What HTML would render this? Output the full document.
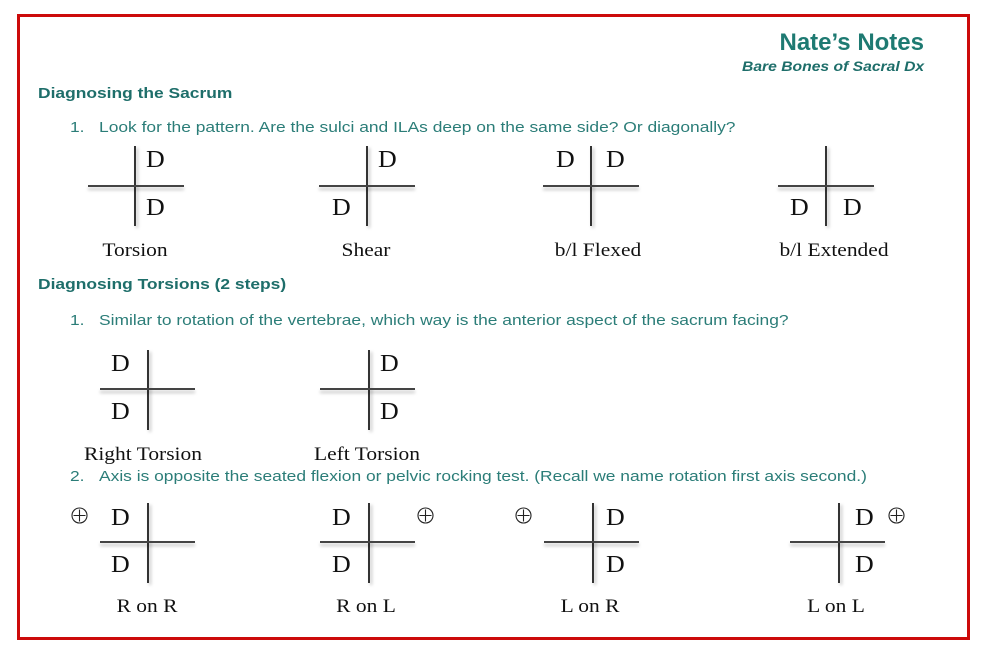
<!DOCTYPE html>
<html><head><style>
body{margin:0;width:982px;height:654px;background:#fff;position:relative;overflow:hidden;font-family:"Liberation Sans",sans-serif}
#frame{position:absolute;left:17px;top:14px;width:947px;height:620px;border:3px solid #cc0a0a}
.a{position:absolute;white-space:nowrap;transform-origin:left center}
.h{color:#1e6e6a;font-weight:bold;font-size:15px;transform:scaleX(1.16)}
.t{color:#2b7d78;font-size:15px;transform:scaleX(1.16)}
.v{position:absolute;width:1.5px;background:#333;box-shadow:2px 2px 3px rgba(0,0,0,.25)}
.hz{position:absolute;height:1.5px;background:#444;box-shadow:0 3px 3px rgba(0,0,0,.25)}
.d{position:absolute;font-family:"Liberation Serif",serif;font-size:24px;color:#111;line-height:24px;transform:scaleX(1.08);transform-origin:left}
.l{position:absolute;font-family:"Liberation Serif",serif;font-size:19px;color:#111;transform:translateX(-50%) scaleX(1.13);white-space:nowrap}
.p{position:absolute;width:17px;height:17px}
</style></head><body>
<div id="frame"></div>
<div class="a" style="right:58px;top:29px;color:#1e7a72;font-weight:bold;font-size:24px">Nate’s Notes</div>
<div class="a" style="left:742px;top:58px;color:#1e6e6a;font-weight:bold;font-style:italic;font-size:14px;transform:scaleX(1.12)">Bare Bones of Sacral Dx</div>
<div class="a h" style="left:38px;top:85px">Diagnosing the Sacrum</div>
<div class="a t" style="left:70px;top:119px">1.&nbsp;&nbsp;&nbsp;Look for the pattern. Are the sulci and ILAs deep on the same side? Or diagonally?</div>

<div class="v" style="left:134px;top:146px;height:80px"></div><div class="hz" style="left:88px;top:185px;width:96px"></div>
<div class="d" style="left:146px;top:148px">D</div><div class="d" style="left:146px;top:196px">D</div>
<div class="l" style="left:135px;top:240px">Torsion</div>

<div class="v" style="left:366px;top:146px;height:80px"></div><div class="hz" style="left:319px;top:185px;width:96px"></div>
<div class="d" style="left:378px;top:148px">D</div><div class="d" style="left:332px;top:196px">D</div>
<div class="l" style="left:366px;top:240px">Shear</div>

<div class="v" style="left:590px;top:146px;height:80px"></div><div class="hz" style="left:543px;top:185px;width:96px"></div>
<div class="d" style="left:556px;top:148px">D</div><div class="d" style="left:606px;top:148px">D</div>
<div class="l" style="left:598px;top:240px">b/l Flexed</div>

<div class="v" style="left:825px;top:146px;height:80px"></div><div class="hz" style="left:778px;top:185px;width:96px"></div>
<div class="d" style="left:790px;top:196px">D</div><div class="d" style="left:843px;top:196px">D</div>
<div class="l" style="left:834px;top:240px">b/l Extended</div>

<div class="a h" style="left:38px;top:276px">Diagnosing Torsions (2 steps)</div>
<div class="a t" style="left:70px;top:312px">1.&nbsp;&nbsp;&nbsp;Similar to rotation of the vertebrae, which way is the anterior aspect of the sacrum facing?</div>

<div class="v" style="left:147px;top:350px;height:80px"></div><div class="hz" style="left:100px;top:388px;width:95px"></div>
<div class="d" style="left:111px;top:352px">D</div><div class="d" style="left:111px;top:400px">D</div>
<div class="l" style="left:143px;top:444px">Right Torsion</div>

<div class="v" style="left:368px;top:350px;height:80px"></div><div class="hz" style="left:320px;top:388px;width:95px"></div>
<div class="d" style="left:380px;top:352px">D</div><div class="d" style="left:380px;top:400px">D</div>
<div class="l" style="left:367px;top:444px">Left Torsion</div>

<div class="a t" style="left:70px;top:468px">2.&nbsp;&nbsp;&nbsp;Axis is opposite the seated flexion or pelvic rocking test. (Recall we name rotation first axis second.)</div>

<svg class="p" style="left:71px;top:507px" viewBox="0 0 17 17"><circle cx="8.5" cy="8.5" r="7.5" fill="none" stroke="#222" stroke-width="1.1"/><path d="M8.5 2.5V14.5M2.5 8.5H14.5" stroke="#222" stroke-width="1.1"/></svg>
<div class="v" style="left:147px;top:503px;height:80px"></div><div class="hz" style="left:100px;top:541px;width:95px"></div>
<div class="d" style="left:111px;top:506px">D</div><div class="d" style="left:111px;top:553px">D</div>
<div class="l" style="left:147px;top:596px">R on R</div>

<svg class="p" style="left:417px;top:507px" viewBox="0 0 17 17"><circle cx="8.5" cy="8.5" r="7.5" fill="none" stroke="#222" stroke-width="1.1"/><path d="M8.5 2.5V14.5M2.5 8.5H14.5" stroke="#222" stroke-width="1.1"/></svg>
<div class="v" style="left:368px;top:503px;height:80px"></div><div class="hz" style="left:320px;top:541px;width:95px"></div>
<div class="d" style="left:332px;top:506px">D</div><div class="d" style="left:332px;top:553px">D</div>
<div class="l" style="left:366px;top:596px">R on L</div>

<svg class="p" style="left:515px;top:507px" viewBox="0 0 17 17"><circle cx="8.5" cy="8.5" r="7.5" fill="none" stroke="#222" stroke-width="1.1"/><path d="M8.5 2.5V14.5M2.5 8.5H14.5" stroke="#222" stroke-width="1.1"/></svg>
<div class="v" style="left:592px;top:503px;height:80px"></div><div class="hz" style="left:544px;top:541px;width:95px"></div>
<div class="d" style="left:606px;top:506px">D</div><div class="d" style="left:606px;top:553px">D</div>
<div class="l" style="left:590px;top:596px">L on R</div>

<svg class="p" style="left:888px;top:507px" viewBox="0 0 17 17"><circle cx="8.5" cy="8.5" r="7.5" fill="none" stroke="#222" stroke-width="1.1"/><path d="M8.5 2.5V14.5M2.5 8.5H14.5" stroke="#222" stroke-width="1.1"/></svg>
<div class="v" style="left:838px;top:503px;height:80px"></div><div class="hz" style="left:790px;top:541px;width:95px"></div>
<div class="d" style="left:855px;top:506px">D</div><div class="d" style="left:855px;top:553px">D</div>
<div class="l" style="left:836px;top:596px">L on L</div>
</body></html>
